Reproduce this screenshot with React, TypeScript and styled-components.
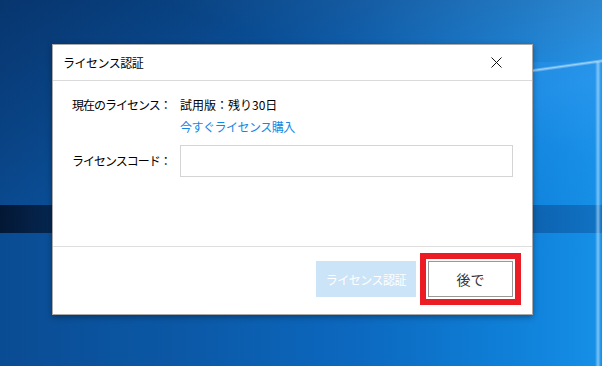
import React from "react";
import styled, { createGlobalStyle } from "styled-components";

const GlobalStyle = createGlobalStyle`
    html, body {
        margin: 0;
        padding: 0;
    }
    body {
        width: 602px;
        height: 366px;
        overflow: hidden;
        font-family: "Noto Sans CJK JP", "Noto Sans", sans-serif;
        background:
            linear-gradient(172deg, rgba(255, 255, 255, 0) 0 55%, rgba(210, 240, 255, 0.7) 60%, rgba(255, 255, 255, 0) 66%) 530px 48px / 72px 28px no-repeat,
            linear-gradient(90deg, rgba(255, 255, 255, 0), rgba(190, 230, 255, 0.6) 50%, rgba(255, 255, 255, 0)) 595px 62px / 6px 304px no-repeat,
            linear-gradient(180deg, rgba(40, 150, 240, 0.45), rgba(40, 150, 240, 0)) 532px 62px / 70px 150px no-repeat,
            linear-gradient(90deg, rgba(2, 18, 42, 0.9), rgba(4, 30, 66, 0.85) 8%, rgba(8, 60, 130, 0.35) 100%) 0 205px / 100% 28px no-repeat,
            linear-gradient(165deg, rgba(5, 35, 80, 0.55) 0%, rgba(5, 35, 80, 0) 45%),
            linear-gradient(200deg, rgba(90, 170, 240, 0.45) 0%, rgba(90, 170, 240, 0) 28%),
            linear-gradient(90deg, #0a4c93 0%, #0b58a6 30%, #0c69c0 60%, #0f80d8 85%, #1690e8 100%);
    }
`;

const Desktop = styled.div`
    box-sizing: border-box;
    width: 602px;
    height: 366px;
    padding: 44px 0 0 52px;
`;

const Dialog = styled.div`
    box-sizing: border-box;
    width: 481px;
    height: 271px;
    display: flex;
    flex-direction: column;
    background: #fff;
    border: 1px solid #a9a9a9;
    box-shadow: 0 2px 6px rgba(0, 0, 0, 0.35);
`;

const Header = styled.div`
    height: 35px;
    display: flex;
    align-items: center;
    justify-content: space-between;
    padding-left: 10px;
    border-bottom: 1px solid #dadada;
`;

const Title = styled.span`
    font-size: 12px;
    letter-spacing: -0.5px;
    color: #000;
`;

const CloseButton = styled.button`
    width: 24px;
    height: 24px;
    margin-right: 24px;
    padding: 0;
    border: none;
    background: none;
    display: flex;
    align-items: center;
    justify-content: center;
    cursor: pointer;
`;

const Body = styled.div`
    flex: 1;
    padding: 14px 19px 0;
    display: grid;
    grid-template-columns: 108px 1fr;
    align-content: start;
    align-items: center;
`;

const Label = styled.span<{ $top?: number }>`
    font-size: 12px;
    letter-spacing: -1px;
    line-height: 20px;
    color: #000;
    margin-top: ${(p) => p.$top ?? 0}px;
`;

const Value = styled.span`
    font-size: 12px;
    line-height: 20px;
    color: #000;
`;

const BuyLink = styled.a`
    grid-column: 2;
    margin-top: 2px;
    font-size: 12px;
    letter-spacing: -0.5px;
    line-height: 20px;
    color: #1387e6;
    text-decoration: none;
    cursor: pointer;
`;

const CodeInput = styled.input`
    box-sizing: border-box;
    height: 32px;
    margin-top: 8px;
    width: 100%;
    border: 1px solid #d4d4d4;
    outline: none;
    padding: 0 8px;
    font-size: 12px;
    font-family: inherit;
`;

const Footer = styled.div`
    height: 68px;
    box-sizing: border-box;
    border-top: 1px solid #dedede;
    padding: 14px 19px 0;
    display: flex;
    justify-content: flex-end;
    align-items: flex-start;
    gap: 12px;
`;

const Button = styled.button<{ $primary?: boolean; $highlight?: boolean }>`
    box-sizing: border-box;
    height: 36px;
    width: ${(p) => (p.$primary ? 100 : 85)}px;
    font-family: inherit;
    font-size: ${(p) => (p.$primary ? 12 : 14)}px;
    letter-spacing: ${(p) => (p.$primary ? -0.5 : 0)}px;
    color: ${(p) => (p.$primary ? "#fff" : "#333")};
    background: ${(p) => (p.$primary ? "#cce4f7" : "#fff")};
    border: ${(p) => (p.$primary ? "none" : "1px solid #999")};
    outline: ${(p) => (p.$highlight ? "6px solid #ec1c24" : "none")};
    outline-offset: 2px;
    cursor: ${(p) => (p.$primary ? "default" : "pointer")};
`;

const CloseIcon = () => (
    <svg width="11" height="11" viewBox="0 0 11 11">
        <path d="M0.5 0.5 L10.5 10.5 M10.5 0.5 L0.5 10.5" stroke="#111" strokeWidth="1" fill="none" />
    </svg>
);

const App: React.FC = () => {
    return (
        <>
            <GlobalStyle />
            <Desktop>
                <Dialog>
                    <Header>
                        <Title>ライセンス認証</Title>
                        <CloseButton aria-label="閉じる">
                            <CloseIcon />
                        </CloseButton>
                    </Header>
                    <Body>
                        <Label>現在のライセンス：</Label>
                        <Value>試用版：残り30日</Value>
                        <BuyLink>今すぐライセンス購入</BuyLink>
                        <Label $top={8}>ライセンスコード：</Label>
                        <CodeInput type="text" />
                    </Body>
                    <Footer>
                        <Button $primary disabled>
                            ライセンス認証
                        </Button>
                        <Button $highlight>後で</Button>
                    </Footer>
                </Dialog>
            </Desktop>
        </>
    );
};

export default App;
